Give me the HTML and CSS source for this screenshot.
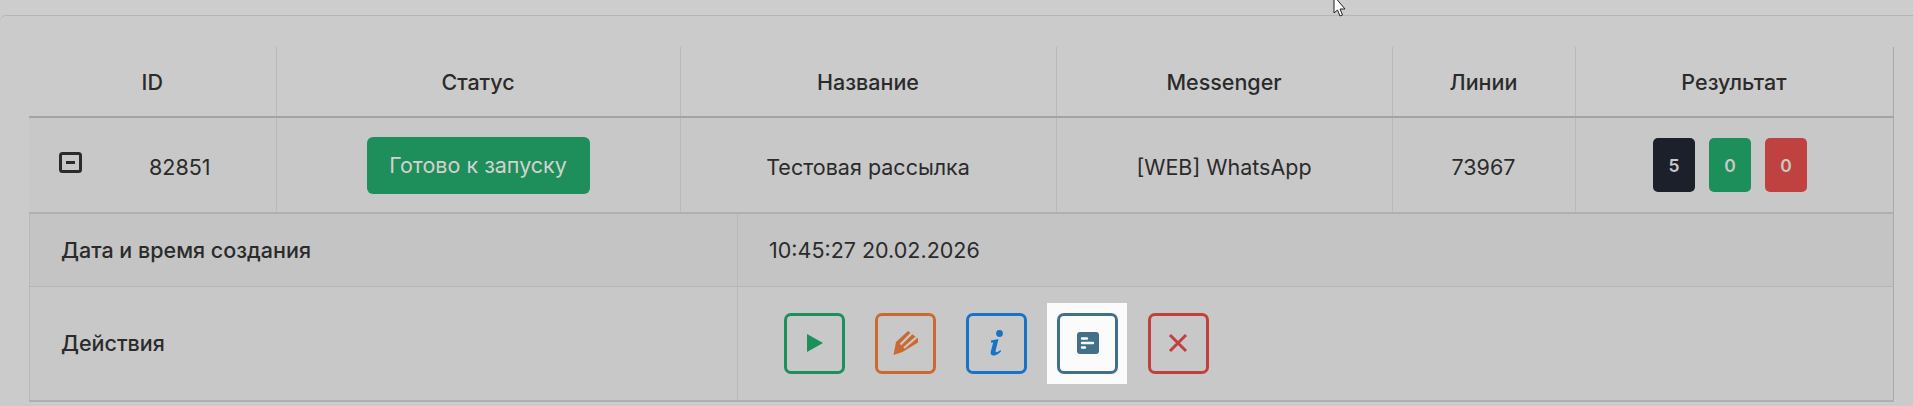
FILE: index.html
```html
<!DOCTYPE html>
<html lang="ru">
<head>
<meta charset="utf-8">
<title>Рассылки</title>
<link rel="stylesheet" href="styles.css">
</head>
<body>
<svg class="cursor" width="14" height="20" viewBox="0 0 14 20"><path d="M1 -4 L1 13 L4.5 10 L7 16 L9.5 15 L7 9 L12 9 Z" fill="#fff" stroke="#222" stroke-width="1"/></svg>
<main class="card">
  <table class="grid main-grid">
    <colgroup><col class="c1"><col class="c2"><col class="c3"><col class="c4"><col class="c5"><col class="c6"></colgroup>
    <thead>
      <tr><th>ID</th><th>Статус</th><th>Название</th><th>Messenger</th><th>Линии</th><th>Результат</th></tr>
    </thead>
    <tbody>
      <tr>
        <td class="txt">
          <div class="id-wrap">
            <svg class="toggle" width="23" height="21" viewBox="0 0 23 21"><rect x="1.5" y="1.5" width="20" height="18" rx="2" fill="none" stroke="#2b2b2b" stroke-width="3"/><rect x="7" y="9" width="9" height="3" fill="#2b2b2b"/></svg>
            <span>82851</span>
          </div>
        </td>
        <td><span class="status-btn">Готово к запуску</span></td>
        <td class="txt">Тестовая рассылка</td>
        <td class="txt">[WEB] WhatsApp</td>
        <td class="txt">73967</td>
        <td>
          <div class="badges">
            <span class="badge b-dark">5</span>
            <span class="badge b-green">0</span>
            <span class="badge b-red">0</span>
          </div>
        </td>
      </tr>
    </tbody>
  </table>
  <table class="grid detail-grid">
    <colgroup><col class="d1"><col class="d2"></colgroup>
    <tbody>
      <tr class="row-date"><th>Дата и время создания</th><td>10:45:27 20.02.2026</td></tr>
      <tr class="row-actions">
        <th>Действия</th>
        <td>
          <div class="actions">
            <span class="slot"><button class="act a-green" type="button"><svg width="18" height="20" viewBox="0 0 18 20"><path d="M1 1 L17 10 L1 19 Z" fill="currentColor"/></svg></button></span>
            <span class="slot"><button class="act a-orange" type="button"><svg width="26" height="26" viewBox="0 0 26 26"><path d="M0.5 25 L3 12 L15 1 L25 8.5 L25 12.5 L9.5 22 Z" fill="currentColor"/><path d="M7.5 14.5 L21 1 M11 18 L26 5" fill="none" stroke="#c8c8c8" stroke-width="2.3"/></svg></button></span>
            <span class="slot"><button class="act a-blue" type="button"><svg width="14" height="26" viewBox="0 0 14 26"><circle cx="9.5" cy="3.5" r="3.4" fill="currentColor"/><path d="M1 10.5 L8.5 9 L5.5 21 Q5.5 22.5 7.5 22 L10.5 20 L11 21.5 Q6.5 26 3 25.5 Q0 25 0.8 21.5 L3.2 12.5 L1 12.5 Z" fill="currentColor"/></svg></button></span>
            <span class="slot slot-lit"><button class="act a-steel" type="button"><svg width="22" height="22" viewBox="0 0 22 22"><rect width="22" height="22" rx="3" fill="currentColor"/><path d="M5 6.5 H10 M5 11 H16 M5 15.5 H8" fill="none" stroke="#fbfbfb" stroke-width="2.4" stroke-linecap="round"/></svg></button></span>
            <span class="slot"><button class="act a-red" type="button"><svg width="20" height="20" viewBox="0 0 20 20"><path d="M2 2 L18 18 M18 2 L2 18" fill="none" stroke="currentColor" stroke-width="3"/></svg></button></span>
          </div>
        </td>
      </tr>
    </tbody>
  </table>
</main>
</body>
</html>
```
FILE: styles.css
```css
* { box-sizing: border-box; }
html, body { margin: 0; height: 100%; }
body {
  background: #cdcdcd;
  font-family: Inter, "Liberation Sans", sans-serif;
  color: #2b2b2b;
  overflow: hidden;
  padding-top: 15px;
  height: 406px;
}
.cursor { position: absolute; left: 1333px; top: 0; }
.card {
  background: #cbcbcb;
  border-top: 1px solid #b5b5b5;
  padding: 31px 20px 0 29px;
  height: 391px;
  border-top-left-radius: 6px;
}
.grid {
  border-collapse: collapse;
  table-layout: fixed;
  width: 1864px;
  font-size: 21.5px;
}
.c1 { width: 247px; } .c2 { width: 404px; } .c3 { width: 376px; }
.c4 { width: 336px; } .c5 { width: 183px; } .c6 { width: 318px; }
.d1 { width: 708px; } .d2 { width: 1156px; }
.main-grid th {
  height: 70px;
  font-weight: 500;
  text-align: center;
  padding: 0;
  border-right: 1px solid #b9b9b9;
  border-bottom: 2px solid #a3a3a3;
}
.main-grid td {
  height: 96px;
  background: #c8c8c8;
  text-align: center;
  padding: 0;
  border-right: 1px solid #b9b9b9;
  border-bottom: 2px solid #b0b0b0;
}
.main-grid td.txt { padding-top: 4px; }
.main-grid th:last-child, .main-grid td:last-child { border-right: 1px solid #a9a9a9; }
.id-wrap { display: flex; align-items: center; padding-left: 30px; gap: 67px; }
.toggle { margin-bottom: 9px; flex: none; }
.status-btn {
  display: inline-flex;
  align-items: center;
  justify-content: center;
  width: 223px;
  height: 57px;
  background: #1e8f5a;
  color: #d2d2d2;
  border-radius: 6px;
}
.badges { display: flex; justify-content: center; gap: 14px; padding-right: 8px; }
.badge {
  display: flex;
  align-items: center;
  justify-content: center;
  width: 42px;
  height: 54px;
  border-radius: 5px;
  font-size: 17.5px;
  font-weight: 600;
  color: #c8c8c8;
}
.b-dark { background: #1c202a; }
.b-green { background: #1c8f5a; }
.b-red { background: #bf4240; }
.detail-grid th, .detail-grid td {
  padding: 0 0 0 31px;
  text-align: left;
  border-right: 1px solid #b9b9b9;
  border-left: 1px solid #b9b9b9;
  font-weight: 400;
}
.detail-grid th { font-weight: 500; }
.row-date th, .row-date td { height: 72px; background: #c4c4c4; border-bottom: 1px solid #b5b5b5; }
.row-actions th, .row-actions td { height: 115px; background: #c8c8c8; border-bottom: 2px solid #afafaf; }
.detail-grid td:last-child { border-right: 1px solid #a9a9a9; }
.row-actions td { padding-left: 0; }
.actions { display: flex; gap: 11px; padding-left: 36px; }
.slot { display: flex; align-items: center; justify-content: center; width: 80px; height: 81px; }
.slot-lit { background: #fbfbfb; }
.act {
  display: flex;
  align-items: center;
  justify-content: center;
  width: 61px;
  height: 61px;
  margin-left: 1px;
  padding: 0;
  background: transparent;
  border: 3px solid currentColor;
  border-radius: 7px;
}
.a-green { color: #1c8f5a; }
.a-orange { color: #c96a33; }
.a-blue { color: #1873c8; }
.a-steel { color: #42708a; }
.a-red { color: #c23f3d; margin-left: 0; }
```
